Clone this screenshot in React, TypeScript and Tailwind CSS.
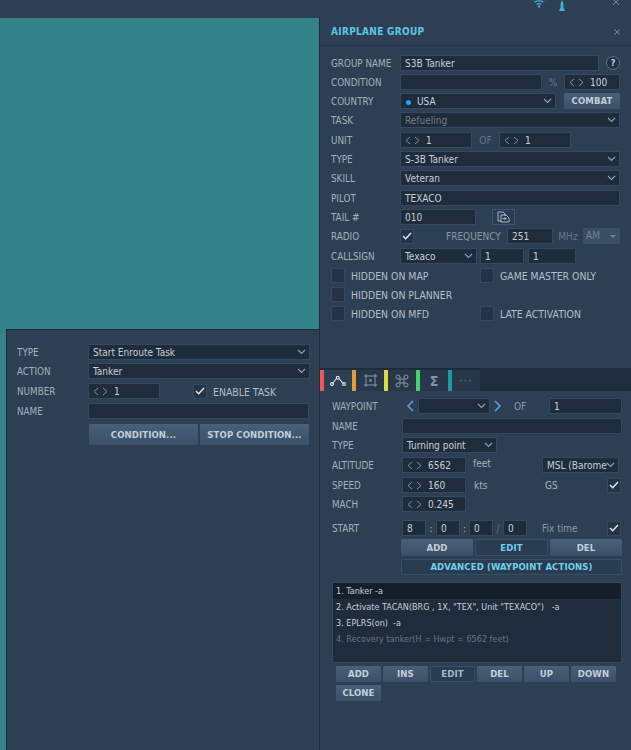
import React from "react";

const Chev = ({ c = "#8fa3b5" }: { c?: string }) => (
  <svg width="9" height="6" viewBox="0 0 9 6" fill="none" stroke={c} strokeWidth="1.1"><path d="M1 1l3.5 3.5L8 1" /></svg>
);

const Arrows = () => (
  <span className="flex items-center gap-[3px] mr-[6px] shrink-0">
    <svg width="6" height="9" viewBox="0 0 6 9" fill="none" stroke="#7c8ea0" strokeWidth="1"><path d="M5 1L1 4.5 5 8" /></svg>
    <svg width="6" height="9" viewBox="0 0 6 9" fill="none" stroke="#7c8ea0" strokeWidth="1"><path d="M1 1l4 3.5L1 8" /></svg>
  </span>
);

const Check = () => (
  <svg width="10" height="8" viewBox="0 0 10 8" fill="none" stroke="#dfe6ec" strokeWidth="1.5"><path d="M1 4L3.7 6.7 9 1" /></svg>
);

const Shell = ({ w, children, muted, cls = "" }: { w: string; children?: React.ReactNode; muted?: boolean; cls?: string }) => (
  <div className={`${w} ${cls} h-[16px] shrink-0 bg-[#1f2c3b] border border-[#33495f] flex items-center pl-[4px] text-[10px] leading-[12px] whitespace-nowrap ${muted ? "text-[#6d7b89]" : "text-[#c6d0da]"}`}>
    {children}
  </div>
);

const Field = ({ w, children, cls = "" }: { w: string; children?: React.ReactNode; cls?: string }) => (
  <Shell w={w} cls={cls}>{children !== undefined && <span className="mt-[2px]">{children}</span>}</Shell>
);

const Select = ({ w, children, muted, cls = "" }: { w: string; children?: React.ReactNode; muted?: boolean; cls?: string }) => (
  <Shell w={w} muted={muted} cls={cls}>
    <span className="flex-1 min-w-0 mt-[2px]">{children}</span>
    <span className="mr-[3px] ml-[1px] flex shrink-0"><Chev /></span>
  </Shell>
);

const Spin = ({ w, v }: { w: string; v: string }) => (
  <Shell w={w}><Arrows /><span className="mt-[2px]">{v}</span></Shell>
);

const Box = ({ on }: { on?: boolean }) => (
  <div className="w-[14px] h-[15px] shrink-0 bg-[#243345] border border-[#33495f] flex items-center justify-center">{on && <Check />}</div>
);

const Label = ({ w = "w-[69px]", children }: { w?: string; children: React.ReactNode }) => (
  <div className={`${w} shrink-0 mt-[2px] text-[9.8px] leading-none text-[#a3afba] whitespace-nowrap`}>{children}</div>
);

const Row = ({ children, cls = "mb-[3px]" }: { children: React.ReactNode; cls?: string }) => (
  <div className={`flex items-center h-[16px] ${cls}`}>{children}</div>
);

const Btn = ({ w, children, outline, blue }: { w: string; children: React.ReactNode; outline?: boolean; blue?: boolean }) => (
  <div className={`${w} shrink-0 flex items-center justify-center font-bold text-[9.5px] tracking-[0.1px] leading-none rounded-[1px] whitespace-nowrap ${outline ? "bg-[#2a3c4f] border border-[#37506a]" : "bg-gradient-to-b from-[#486078] to-[#3a5068]"} ${blue ? "text-[#6fd0ec]" : outline ? "text-[#a5b8c9]" : "text-[#c3ced8]"}`}>
    {children}
  </div>
);

const Tab = ({ color, children, first }: { color: string; children: React.ReactNode; first?: boolean }) => (
  <div className="flex h-[21px] items-stretch">
    <div className={`w-[4px] ${color}`} />
    <div className={`w-[28px] flex items-center justify-center ${first ? "bg-[#2d4053]" : "bg-[#27384a]"}`}>{children}</div>
  </div>
);

const Opt = ({ w, children }: { w?: string; children: React.ReactNode }) => (
  <span className={`${w ?? ""} mt-[2px] text-[10.4px] text-[#b3bfca] leading-none whitespace-nowrap`}>{children}</span>
);

const Small = ({ w, children, c = "text-[#a3afba]" }: { w: string; children: React.ReactNode; c?: string }) => (
  <span className={`${w} ${c} mt-[2px] text-[10px] leading-none whitespace-nowrap`}>{children}</span>
);

export default function App() {
  return (
    <div className="w-[631px] h-[750px] flex flex-col overflow-hidden bg-[#2d4053] font-['DejaVu_Sans_Condensed','Lato',sans-serif] relative">
      <div className="h-[18px] shrink-0 flex justify-end items-start bg-[#2d4053]">
        <svg className="mr-[12px] -mt-[3px]" width="14" height="12" viewBox="0 0 14 12" fill="none" stroke="#3fb2cc" strokeWidth="1.4">
          <path d="M0.5 3c3-2.5 10-2.5 13 0M2.5 5.2c2.4-1.7 6.6-1.7 9 0M4.6 7.5c1.2-.9 3.6-.9 4.8 0" />
          <circle cx="7" cy="9.4" r="1.2" fill="#3fb2cc" stroke="none" />
        </svg>
        <svg className="mr-[46px]" width="8" height="12" viewBox="0 0 8 12" fill="#3fb2cc"><path d="M4 0L5.4 3.5V7.5L7 11H1L2.6 7.5V3.5z" /></svg>
        <svg className="mr-[11px] -mt-[2px]" width="8" height="8" viewBox="0 0 8 8" stroke="#71869a" strokeWidth="1"><path d="M1 1l6 6M7 1L1 7" /></svg>
      </div>
      <div className="flex flex-1 min-h-0">
        <div className="w-[319px] shrink-0 flex flex-col">
          <div className="h-[311px] shrink-0 bg-[#368289]" />
          <div className="flex-1 flex bg-[#2d4053]">
            <div className="w-[6px] shrink-0 bg-[#368289] h-full" />
            <div className="flex-1 border-t border-l border-[#1d2a38] pt-[14px] pl-[10px]">
              <Row><Label w="w-[71px]">TYPE</Label><Select w="w-[222px]">Start Enroute Task</Select></Row>
              <Row cls="mb-[4px]"><Label w="w-[71px]">ACTION</Label><Select w="w-[222px]">Tanker</Select></Row>
              <Row cls="mb-[4px]">
                <Label w="w-[71px]">NUMBER</Label>
                <Spin w="w-[72px]" v="1" />
                <div className="ml-[33px] mr-[6px]"><Box on /></div>
                <Opt>ENABLE TASK</Opt>
              </Row>
              <Row cls=""><Label w="w-[71px]">NAME</Label><Field w="w-[221px]" /></Row>
              <div className="flex h-[21px] ml-[72px] mt-[5px] gap-[2px]">
                <Btn w="w-[109px]">CONDITION...</Btn>
                <Btn w="w-[109px]">STOP CONDITION...</Btn>
              </div>
            </div>
          </div>
        </div>
        <div className="flex-1 min-w-0 flex flex-col border-l border-[#1d2a38]">
          <div className="h-[28px] flex items-center justify-between border-b border-[#243445] pl-[11px] pr-[10px] shrink-0">
            <span className="mt-[1px] text-[10px] font-bold tracking-[0.3px] text-[#5dc6e2] leading-none">AIRPLANE GROUP</span>
            <svg width="8" height="8" viewBox="0 0 8 8" stroke="#71869a" strokeWidth="1"><path d="M1 1l6 6M7 1L1 7" /></svg>
          </div>
          <div className="pl-[11px] pt-[9px]">
            <Row>
              <Label>GROUP NAME</Label>
              <Field w="w-[199px]">S3B Tanker</Field>
              <div className="ml-[7px] w-[14px] h-[14px] rounded-full border border-[#5a7189] bg-[#223142] flex items-center justify-center text-[9px] font-bold text-[#c6d0da] leading-none">?</div>
            </Row>
            <Row>
              <Label>CONDITION</Label>
              <Field w="w-[142px]" />
              <Small w="w-[22px] text-center" c="text-[#64768a]">%</Small>
              <Spin w="w-[56px]" v="100" />
            </Row>
            <Row>
              <Label>COUNTRY</Label>
              <Select w="w-[156px]">
                <span className="flex items-center">
                  <span className="w-[5px] h-[5px] rounded-full bg-[#12a9ee] mr-[6px] ml-[1px]" />USA
                </span>
              </Select>
              <Btn w="w-[56px] h-[16px] ml-[8px]">COMBAT</Btn>
            </Row>
            <Row cls="mb-[4px]"><Label>TASK</Label><Select w="w-[220px]" muted>Refueling</Select></Row>
            <Row>
              <Label>UNIT</Label>
              <Spin w="w-[72px]" v="1" />
              <Small w="w-[27px] text-center" c="text-[#64768a]">OF</Small>
              <Spin w="w-[72px]" v="1" />
            </Row>
            <Row><Label>TYPE</Label><Select w="w-[220px]">S-3B Tanker</Select></Row>
            <Row cls="mb-[4px]"><Label>SKILL</Label><Select w="w-[220px]">Veteran</Select></Row>
            <Row><Label>PILOT</Label><Field w="w-[220px]">TEXACO</Field></Row>
            <Row>
              <Label>TAIL #</Label>
              <Field w="w-[76px]">010</Field>
              <div className="ml-[16px] w-[23px] h-[16px] bg-[#2a3c4f] border border-[#3d556e] flex items-center justify-center">
                <svg width="13" height="12" viewBox="0 0 13 12" fill="none" stroke="#b6c3cf" strokeWidth="0.9">
                  <path d="M1 1h5l2 2v2M1 1v9h3M4 4h5l3 3v4H4zM5.5 7.5h3.5M7.5 6L9 7.5 7.5 9" />
                </svg>
              </div>
            </Row>
            <Row cls="mb-[4px]">
              <Label>RADIO</Label>
              <Box on />
              <Small w="ml-[32px] w-[61px]" c="text-[#8b98a5]">FREQUENCY</Small>
              <Field w="w-[46px]">251</Field>
              <Small w="w-[30px] text-center" c="text-[#64768a]">MHz</Small>
              <div className="w-[37px] h-[16px] bg-[#3a4f64] flex items-center pl-[3px] text-[10px] text-[#708294] leading-none">
                <span className="flex-1">AM</span>
                <span className="w-0 h-0 mr-[4px] border-x-[3px] border-x-transparent border-t-[3px] border-t-[#708294]" />
              </div>
            </Row>
            <Row>
              <Label>CALLSIGN</Label>
              <Select w="w-[77px]">Texaco</Select>
              <Field w="w-[44px]" cls="ml-[3px]">1</Field>
              <Field w="w-[48px]" cls="ml-[4px]">1</Field>
            </Row>
            <Row>
              <Box /><Opt w="ml-[6px] w-[129px]">HIDDEN ON MAP</Opt>
              <Box /><Opt w="ml-[6px]">GAME MASTER ONLY</Opt>
            </Row>
            <Row>
              <Box /><Opt w="ml-[6px]">HIDDEN ON PLANNER</Opt>
            </Row>
            <Row cls="">
              <Box /><Opt w="ml-[6px] w-[129px]">HIDDEN ON MFD</Opt>
              <Box /><Opt w="ml-[6px]">LATE ACTIVATION</Opt>
            </Row>
          </div>
          <div className="h-[23px] mt-[47px] shrink-0 bg-[#1f2c3b] flex items-end">
            <Tab color="bg-[#f0575d]" first>
              <svg width="16" height="10" viewBox="0 0 16 10" fill="none" stroke="#dfe6ec" strokeWidth="1.1"><path d="M2.5 7.5l4-5M9 2.5l4 5" /><circle cx="2" cy="8" r="1.4" /><circle cx="7.7" cy="1.8" r="1.4" /><circle cx="14" cy="8" r="1.4" /></svg>
            </Tab>
            <Tab color="bg-[#e29b3e]">
              <svg width="13" height="13" viewBox="0 0 13 13" fill="none" stroke="#8496a6" strokeWidth="1"><path d="M0 2h13M0 11h13M2 0v13M11 0v13" /><circle cx="6.5" cy="6.5" r="1.3" fill="#8496a6" stroke="none" /></svg>
            </Tab>
            <Tab color="bg-[#dfd744]">
              <svg width="14" height="14" viewBox="0 0 14 14" fill="none" stroke="#8496a6" strokeWidth="1"><path d="M5 5H3a2 2 0 1 1 2-2zM9 5V3a2 2 0 1 1 2 2zM9 9h2a2 2 0 1 1-2 2zM5 9v2a2 2 0 1 1-2-2zM5 5h4v4H5z" /></svg>
            </Tab>
            <Tab color="bg-[#45d06a]"><span className="text-[14px] font-bold text-[#8496a6] leading-none">Σ</span></Tab>
            <Tab color="bg-[#1f9aa3]"><span className="text-[11px] tracking-[1.5px] text-[#6d7f90] leading-none">···</span></Tab>
          </div>
          <div className="pl-[12px] pt-[7px]">
            <Row cls="mb-[4px]">
              <Label w="w-[70px]">WAYPOINT</Label>
              <svg className="ml-[4px] mr-[3px]" width="9" height="12" viewBox="0 0 9 12" fill="none" stroke="#5c9cdb" strokeWidth="1.6"><path d="M7 1L2 6l5 5" /></svg>
              <Select w="w-[72px]" />
              <svg className="ml-[3px]" width="9" height="12" viewBox="0 0 9 12" fill="none" stroke="#5c9cdb" strokeWidth="1.6"><path d="M2 1l5 5-5 5" /></svg>
              <Small w="ml-[12px] w-[35px]" c="text-[#8b98a5]">OF</Small>
              <Field w="w-[73px]">1</Field>
            </Row>
            <Row><Label w="w-[70px]">NAME</Label><Field w="w-[220px]" /></Row>
            <Row cls="mb-[4px]"><Label w="w-[70px]">TYPE</Label><Select w="w-[95px]">Turning point</Select></Row>
            <Row cls="mb-[4px]">
              <Label w="w-[70px]">ALTITUDE</Label>
              <Spin w="w-[64px]" v="6562" />
              <span className="ml-[7px] w-[69px] text-[10px] text-[#a3afba] leading-none -mt-[2px]">feet</span>
              <Select w="w-[77px]">MSL (Barome</Select>
            </Row>
            <Row>
              <Label w="w-[70px]">SPEED</Label>
              <Spin w="w-[64px]" v="160" />
              <Small w="ml-[8px] w-[71px]">kts</Small>
              <Small w="w-[62px]">GS</Small>
              <Box on />
            </Row>
            <Row cls="mb-[8px]"><Label w="w-[70px]">MACH</Label><Spin w="w-[64px]" v="0.245" /></Row>
            <Row>
              <Label w="w-[70px]">START</Label>
              <Field w="w-[24px]">8</Field>
              <Small w="w-[10px] text-center">:</Small>
              <Field w="w-[24px]">0</Field>
              <Small w="w-[9px] text-center">:</Small>
              <Field w="w-[24px]">0</Field>
              <Small w="w-[10px] text-center" c="text-[#64768a]">/</Small>
              <Field w="w-[24px]">0</Field>
              <Small w="ml-[15px] w-[65px]" c="text-[#8b98a5]">Fix time</Small>
              <Box on />
            </Row>
            <div className="flex h-[17px] ml-[69px] gap-[2px] mb-[3px]">
              <Btn w="w-[72px]">ADD</Btn>
              <Btn w="w-[73px]" outline blue>EDIT</Btn>
              <Btn w="w-[72px]">DEL</Btn>
            </div>
            <div className="flex h-[16px] ml-[69px] mb-[7px]">
              <Btn w="w-[221px]" outline blue>ADVANCED (WAYPOINT ACTIONS)</Btn>
            </div>
            <div className="w-[290px] h-[81px] bg-[#1f2c3b] border border-[#33495f] text-[9px] text-[#c6d0da] leading-none">
              <div className="h-[16px] bg-[#151e29] flex items-center pl-[3px]">1. Tanker -a</div>
              <div className="h-[16px] flex items-center pl-[3px] whitespace-pre">2. Activate TACAN(BRG , 1X, "TEX", Unit "TEXACO")   -a</div>
              <div className="h-[16px] flex items-center pl-[3px] whitespace-pre">3. EPLRS(on)  -a</div>
              <div className="h-[16px] flex items-center pl-[3px] text-[#66757f]">4. Recovery tanker(H = Hwpt = 6562 feet)</div>
            </div>
            <div className="flex h-[16px] ml-[4px] mt-[3px] gap-[2px]">
              <Btn w="w-[45px]">ADD</Btn>
              <Btn w="w-[45px]">INS</Btn>
              <Btn w="w-[45px]" outline>EDIT</Btn>
              <Btn w="w-[45px]">DEL</Btn>
              <Btn w="w-[45px]">UP</Btn>
              <Btn w="w-[45px]">DOWN</Btn>
            </div>
            <div className="flex h-[16px] ml-[4px] mt-[3px]">
              <Btn w="w-[45px]">CLONE</Btn>
            </div>
          </div>
        </div>
      </div>
    </div>
  );
}
